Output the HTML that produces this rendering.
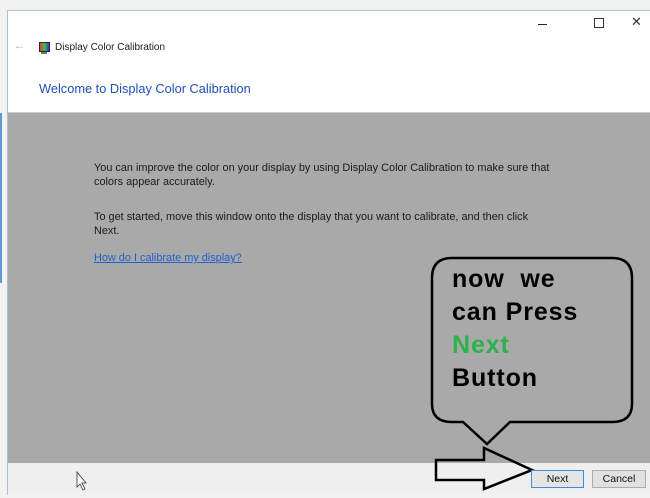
<!DOCTYPE html>
<html><head><meta charset="utf-8"><style>
body{margin:0;width:650px;height:498px;background:#f2f2f2;position:relative;overflow:hidden;font-family:"Segoe UI","Liberation Sans",sans-serif;}
.win{position:absolute;left:7px;top:10px;width:643px;height:485px;background:#fff;border:1px solid #a9c0d8;border-right:none;box-sizing:border-box;}
.abs{position:absolute;}
.t{font-size:10.9px;color:#1a1a1a;}
.btn{position:absolute;height:18px;font-size:10.5px;text-align:center;line-height:16px;box-sizing:border-box;color:#111;}
.bub{font-family:"Liberation Sans",sans-serif;font-weight:bold;font-size:25px;line-height:33px;position:absolute;left:452px;top:263px;color:#000;letter-spacing:0.9px;}
</style></head><body>
<div class="abs" style="left:0;top:113px;width:2px;height:170px;background:#5b9bd5"></div>
<div class="win">
 <div class="abs" style="left:530px;top:13px;width:9px;height:1px;background:#222"></div>
 <div class="abs" style="left:586px;top:7px;width:8px;height:8px;border:1px solid #333"></div>
 <div class="abs" style="left:623px;top:3px;font-size:13px;color:#333">✕</div>
 <div class="abs" style="left:6px;top:29px;font-size:11px;color:#aaa">←</div>
 <div class="abs" style="left:31px;top:31px;width:9px;height:8px;background:linear-gradient(90deg,#e33,#3c3,#33e);border:1px solid #224"></div>
 <div class="abs" style="left:33px;top:41px;width:6px;height:2px;background:#777"></div>
 <div class="abs" style="left:47px;top:31px;font-size:10px;color:#222">Display Color Calibration</div>
 <div class="abs" style="left:31px;top:70px;font-size:12.8px;color:#1f4fb8">Welcome to Display Color Calibration</div>
 <div class="abs" style="left:0;top:101px;width:643px;height:351px;background:#a9a9a9;border-top:1px solid #ccc"></div>
 <div class="abs" style="left:0;top:452px;width:643px;height:32px;background:#efefef"></div>
</div>
<div class="abs t" style="left:94px;top:161px;line-height:14px">You can improve the color on your display by using Display Color Calibration to make sure that<br>colors appear accurately.</div>
<div class="abs t" style="left:94px;top:210px;line-height:14px">To get started, move this window onto the display that you want to calibrate, and then click<br>Next.</div>
<div class="abs t" style="left:94px;top:252px;color:#1f5fcf;text-decoration:underline">How do I calibrate my display?</div>
<svg class="abs" style="left:0;top:0" width="650" height="498">
 <path d="M452 258 H612 Q632 258 632 278 V404 Q632 422 612 422 H510 L487 444 L463 422 H452 Q432 422 432 404 V278 Q432 258 452 258 Z" fill="none" stroke="#000" stroke-width="2.5"/>
 <path d="M436 460 H484 V448 L532 470 L484 489 V480 H436 Z" fill="none" stroke="#000" stroke-width="2.5"/>
 <path d="M77 472 V487 L80 484 L83 490 L85 489 L82 483 L86 483 Z" fill="#fff" stroke="#333" stroke-width="0.8"/>
</svg>
<div class="bub">now&nbsp; we<br>can Press<br><span style="color:#2bb24c">Next</span><br>Button</div>
<div class="btn" style="left:531px;top:470px;width:53px;border:1px solid #3c8ed8;background:#e5e5e5">Next</div>
<div class="btn" style="left:592px;top:470px;width:54px;border:1px solid #adadad;background:#e1e1e1">Cancel</div>
</body></html>
